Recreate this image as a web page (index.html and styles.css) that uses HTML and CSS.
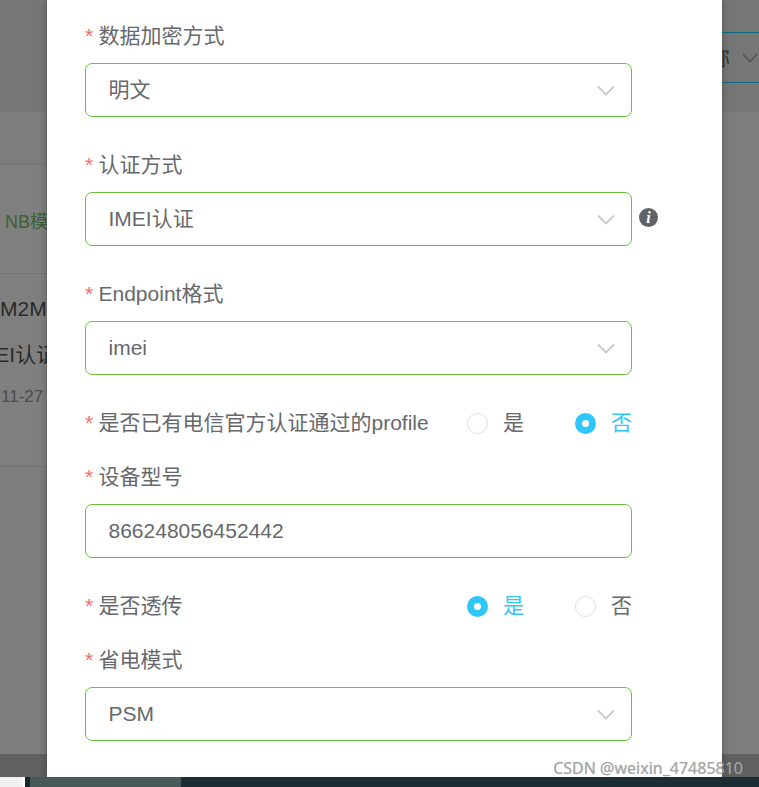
FILE: index.html
```html
<!DOCTYPE html>
<html lang="zh-CN">
<head>
    <meta charset="UTF-8">
    <meta name="viewport" content="width=device-width, initial-scale=1.0">
    <title>设备配置</title>
    <link rel="stylesheet" href="styles.css">
</head>
<body>
    <div class="screen">
        <div class="page">
            <header class="top-bar">
                <div class="search-select">
                    <span>名称</span>
                    <svg class="chevron" width="16" height="10" viewBox="0 0 16 10"><path d="M1 1l7 7.5L15 1"/></svg>
                </div>
            </header>
            <main class="main">
                <section class="card">
                    <div class="card-head"><span class="card-type">NB模组设备</span></div>
                    <div class="card-body">
                        <div class="card-line line-proto">M2M</div>
                        <div class="card-line line-auth">IMEI认证</div>
                        <div class="card-line line-date">11-27</div>
                    </div>
                </section>
            </main>
            <footer class="page-foot"></footer>
        </div>

        <div class="mask"></div>

        <div class="modal">
            <form class="form">
                <div class="form-item">
                    <label class="form-label"><i class="req">*</i>数据加密方式</label>
                    <div class="select">
                        <span>明文</span>
                        <svg class="chevron" width="18" height="11" viewBox="0 0 18 11"><path d="M1 1.5l8 8 8-8"/></svg>
                    </div>
                </div>
                <div class="form-item">
                    <label class="form-label"><i class="req">*</i>认证方式</label>
                    <div class="control-row">
                        <div class="select">
                            <span>IMEI认证</span>
                            <svg class="chevron" width="18" height="11" viewBox="0 0 18 11"><path d="M1 1.5l8 8 8-8"/></svg>
                        </div>
                        <span class="info-icon">i</span>
                    </div>
                </div>
                <div class="form-item">
                    <label class="form-label"><i class="req">*</i>Endpoint格式</label>
                    <div class="select">
                        <span>imei</span>
                        <svg class="chevron" width="18" height="11" viewBox="0 0 18 11"><path d="M1 1.5l8 8 8-8"/></svg>
                    </div>
                </div>
                <div class="form-item radio-item">
                    <label class="form-label"><i class="req">*</i>是否已有电信官方认证通过的profile</label>
                    <div class="radio-group">
                        <span class="radio"><i class="radio-dot"></i>是</span>
                        <span class="radio checked"><i class="radio-dot"></i>否</span>
                    </div>
                </div>
                <div class="form-item">
                    <label class="form-label"><i class="req">*</i>设备型号</label>
                    <div class="select"><span>866248056452442</span></div>
                </div>
                <div class="form-item radio-item">
                    <label class="form-label"><i class="req">*</i>是否透传</label>
                    <div class="radio-group">
                        <span class="radio checked"><i class="radio-dot"></i>是</span>
                        <span class="radio"><i class="radio-dot"></i>否</span>
                    </div>
                </div>
                <div class="form-item">
                    <label class="form-label"><i class="req">*</i>省电模式</label>
                    <div class="select">
                        <span>PSM</span>
                        <svg class="chevron" width="18" height="11" viewBox="0 0 18 11"><path d="M1 1.5l8 8 8-8"/></svg>
                    </div>
                </div>
            </form>
        </div>
    </div>

    <div class="task-bar">
        <div class="task-light"></div>
        <div class="task-gap"></div>
        <div class="task-active"></div>
    </div>

    <div class="watermark">CSDN @weixin_47485810</div>
</body>
</html>
```

FILE: styles.css
```css
* {
    box-sizing: border-box;
}

html,
body {
    margin: 0;
    height: 787px;
    overflow: hidden;
}

body {
    position: relative;
    font-family: "Liberation Sans", "Noto Sans CJK SC", sans-serif;
    font-size: 21px;
    color: #66686c;
    background: #1b2e33;
}

.screen {
    position: relative;
    height: 777px;
    overflow: hidden;
}

.page {
    display: flex;
    flex-direction: column;
    height: 100%;
}

.top-bar {
    display: flex;
    justify-content: flex-end;
    flex: none;
    height: 112px;
    padding-top: 32px;
    background: #ededed;
}

.search-select {
    display: flex;
    align-items: center;
    justify-content: flex-end;
    gap: 12px;
    width: 120px;
    height: 51px;
    padding-right: 1px;
    line-height: 26px;
    border-top: 1px solid #1fdcff;
    border-bottom: 1px solid #1fdcff;
}

.search-select .chevron path {
    stroke: #a9abb2;
}

.main {
    flex: 1;
    padding-top: 53px;
    background: #fafafa;
}

.card {
    width: 600px;
    height: 300px;
    background: #fff;
    box-shadow: 0 0 3px rgba(0, 0, 0, 0.12);
}

.card-head {
    display: flex;
    align-items: center;
    height: 109px;
    padding: 5px 0 0 5px;
    border-bottom: 1px solid #e4e4e4;
}

.card-type {
    font-size: 18px;
    line-height: 26px;
    color: #78c46a;
    white-space: nowrap;
}

.card-body {
    padding-top: 22px;
}

.card-line {
    white-space: nowrap;
    color: #555;
}

.line-proto {
    height: 46px;
    line-height: 26px;
}

.line-auth {
    height: 42px;
    line-height: 26px;
    margin-left: -28px;
}

.line-date {
    line-height: 26px;
    font-size: 17px;
    margin-left: 1px;
    color: #999;
}

.page-foot {
    flex: none;
    height: 23px;
    background: #c0c0c0;
}

.mask {
    position: absolute;
    inset: 0;
    background: rgba(0, 0, 0, 0.5);
}

.modal {
    position: absolute;
    top: 0;
    left: 47px;
    width: 675px;
    height: 777px;
    padding: 9px 38px;
    overflow: hidden;
    background: #fff;
    box-shadow: 0 0 8px rgba(0, 0, 0, 0.3);
}

.form {
    width: 547px;
}

.form-item {
    margin-bottom: 21px;
}

.form-label {
    display: block;
    height: 54px;
    line-height: 54px;
    white-space: nowrap;
}

.req {
    display: inline-block;
    width: 13.5px;
    font-style: normal;
    color: #f56c6c;
}

.control-row {
    display: flex;
    align-items: flex-start;
    gap: 7px;
}

.select {
    display: flex;
    align-items: center;
    justify-content: space-between;
    flex: none;
    width: 547px;
    height: 54px;
    padding: 0 16px 0 22.5px;
    line-height: 26px;
    border: 1px solid #67c23a;
    border-radius: 7px;
    background: #fff;
}

.chevron {
    flex: none;
}

.chevron path {
    fill: none;
    stroke: #c8c9d2;
    stroke-width: 1.8;
}

.info-icon {
    flex: none;
    width: 19px;
    height: 19px;
    margin-top: 16px;
    border-radius: 50%;
    background: #606266;
    color: #fff;
    font-family: "Liberation Serif", serif;
    font-size: 16px;
    font-weight: bold;
    font-style: italic;
    line-height: 19px;
    text-align: center;
}

.radio-item {
    display: flex;
    align-items: center;
    justify-content: space-between;
    height: 54px;
    margin-bottom: 0;
}

.radio-group {
    display: flex;
    justify-content: space-between;
    width: 165px;
}

.radio {
    display: flex;
    align-items: center;
    gap: 15px;
    line-height: 26px;
}

.radio-dot {
    width: 21px;
    height: 21px;
    border: 1px solid #dcdfe6;
    border-radius: 50%;
    background: #fff;
}

.radio.checked {
    color: #2fc6fc;
}

.radio.checked .radio-dot {
    border: 7px solid #2fc6fc;
}

.task-bar {
    display: flex;
    height: 10px;
}

.task-light {
    width: 25px;
    background: #f0f0f0;
    border-right: 2px solid #fff;
}

.task-gap {
    width: 5px;
    background: #12262b;
}

.task-active {
    width: 151px;
    background: #475a5a;
}

.watermark {
    position: absolute;
    right: 16px;
    bottom: 8px;
    font-family: "Noto Sans", sans-serif;
    font-size: 16px;
    line-height: 22px;
    color: #a6a6a6;
    text-shadow: 0 0 1px rgba(120, 120, 120, 0.45);
    white-space: nowrap;
}
```
